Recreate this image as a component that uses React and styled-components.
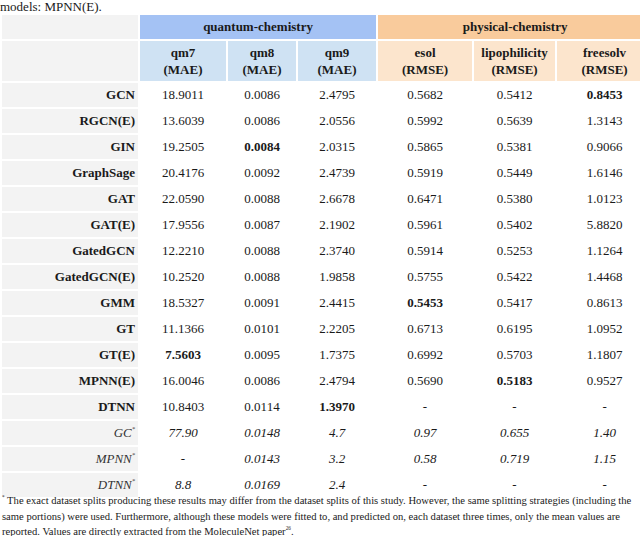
import styled, { createGlobalStyle, css } from "styled-components";

const GlobalStyle = createGlobalStyle`
  html, body {
    margin: 0;
    padding: 0;
    background: #ffffff;
    overflow: hidden;
  }
  body {
    font-family: "Liberation Serif", "Times New Roman", serif;
    color: #1a1a1a;
  }
`;

const Page = styled.div`
  width: 640px;
  height: 536px;
  overflow: hidden;
`;

const Lead = styled.p`
  margin: 0;
  height: 13px;
  font-size: 13px;
  line-height: 13px;
  white-space: nowrap;
`;

const Table = styled.table`
  width: 654px;
  border-collapse: separate;
  border-spacing: 2px;
  table-layout: fixed;
  font-family: "Liberation Serif", "Times New Roman", serif;
  font-size: 13px;
  color: #1a1a1a;
`;

const Cell = styled.td`
  padding: 0;
  height: 24px;
  line-height: 16px;
  text-align: center;
  vertical-align: middle;
  white-space: nowrap;
  font-weight: ${(p) => (p.$bold ? "bold" : "normal")};
  font-style: ${(p) => (p.$italic ? "italic" : "normal")};
`;

const Corner = styled.td`
  background: #f3f3f3;
  padding: 0;
`;

const GroupHead = styled.th`
  height: 24px;
  padding: 0;
  font-weight: bold;
  text-align: center;
  vertical-align: middle;
  background: ${(p) => (p.$tone === "blue" ? "#a4c2f4" : "#f9cb9c")};
`;

const SubHead = styled.th`
  height: 40px;
  padding: 0;
  font-weight: bold;
  line-height: 17px;
  text-align: center;
  vertical-align: middle;
  background: ${(p) => (p.$tone === "blue" ? "#cfe2f3" : "#fce5cd")};
`;

const RowLabel = styled.th`
  height: 24px;
  padding: 0 3px 0 0;
  text-align: right;
  vertical-align: middle;
  background: #f3f3f3;
  white-space: nowrap;
  ${(p) =>
    p.$italic
      ? css`
          font-weight: normal;
          font-style: italic;
          color: #333333;
        `
      : css`
          font-weight: bold;
        `}
`;

const Sup = styled.sup`
  font-size: 0.5em;
  vertical-align: 0.9em;
  line-height: 0;
`;

const Footnote = styled.p`
  margin: -6px 0 0;
  padding-left: 2px;
  font-size: 10.6px;
  line-height: 15.5px;
  white-space: nowrap;
  color: #1a1a1a;
`;

const widths = [136, 86, 68, 78, 94, 81, 95];

const blue = [
  ["qm7", "MAE"],
  ["qm8", "MAE"],
  ["qm9", "MAE"],
];
const orange = [
  ["esol", "RMSE"],
  ["lipophilicity", "RMSE"],
  ["freesolv", "RMSE"],
];

// [label, values, index of bold value]
const rows = [
  ["GCN", ["18.9011", "0.0086", "2.4795", "0.5682", "0.5412", "0.8453"], 5],
  ["RGCN(E)", ["13.6039", "0.0086", "2.0556", "0.5992", "0.5639", "1.3143"], -1],
  ["GIN", ["19.2505", "0.0084", "2.0315", "0.5865", "0.5381", "0.9066"], 1],
  ["GraphSage", ["20.4176", "0.0092", "2.4739", "0.5919", "0.5449", "1.6146"], -1],
  ["GAT", ["22.0590", "0.0088", "2.6678", "0.6471", "0.5380", "1.0123"], -1],
  ["GAT(E)", ["17.9556", "0.0087", "2.1902", "0.5961", "0.5402", "5.8820"], -1],
  ["GatedGCN", ["12.2210", "0.0088", "2.3740", "0.5914", "0.5253", "1.1264"], -1],
  ["GatedGCN(E)", ["10.2520", "0.0088", "1.9858", "0.5755", "0.5422", "1.4468"], -1],
  ["GMM", ["18.5327", "0.0091", "2.4415", "0.5453", "0.5417", "0.8613"], 3],
  ["GT", ["11.1366", "0.0101", "2.2205", "0.6713", "0.6195", "1.0952"], -1],
  ["GT(E)", ["7.5603", "0.0095", "1.7375", "0.6992", "0.5703", "1.1807"], 0],
  ["MPNN(E)", ["16.0046", "0.0086", "2.4794", "0.5690", "0.5183", "0.9527"], 4],
  ["DTNN", ["10.8403", "0.0114", "1.3970", "-", "-", "-"], 2],
];

const reported = [
  ["GC", ["77.90", "0.0148", "4.7", "0.97", "0.655", "1.40"]],
  ["MPNN", ["-", "0.0143", "3.2", "0.58", "0.719", "1.15"]],
  ["DTNN", ["8.8", "0.0169", "2.4", "-", "-", "-"]],
];

export default function App() {
  return (
    <Page>
      <GlobalStyle />
      <Lead>models: MPNN(E).</Lead>
      <Table>
        <colgroup>
          {widths.map((w, i) => (
            <col key={i} style={{ width: w }} />
          ))}
        </colgroup>
        <thead>
          <tr>
            <Corner />
            <GroupHead colSpan={3} $tone="blue">quantum-chemistry</GroupHead>
            <GroupHead colSpan={3} $tone="orange">physical-chemistry</GroupHead>
          </tr>
          <tr>
            <Corner />
            {blue.map(([name, metric]) => (
              <SubHead key={name} $tone="blue">
                {name}
                <br />({metric})
              </SubHead>
            ))}
            {orange.map(([name, metric]) => (
              <SubHead key={name} $tone="orange">
                {name}
                <br />({metric})
              </SubHead>
            ))}
          </tr>
        </thead>
        <tbody>
          {rows.map(([label, values, best]) => (
            <tr key={label}>
              <RowLabel>{label}</RowLabel>
              {values.map((v, i) => (
                <Cell key={i} $bold={i === best}>
                  {v}
                </Cell>
              ))}
            </tr>
          ))}
          {reported.map(([label, values]) => (
            <tr key={label + "*"}>
              <RowLabel $italic>
                {label}
                <Sup>*</Sup>
              </RowLabel>
              {values.map((v, i) => (
                <Cell key={i} $italic>
                  {v}
                </Cell>
              ))}
            </tr>
          ))}
        </tbody>
      </Table>
      <Footnote>
        <Sup>*</Sup> The exact dataset splits producing these results may differ from the dataset splits of this study. However, the same splitting strategies (including the
        <br />
        same portions) were used. Furthermore, although these models were fitted to, and predicted on, each dataset three times, only the mean values are
        <br />
        reported. Values are directly extracted from the MoleculeNet paper<Sup>26</Sup>.
      </Footnote>
    </Page>
  );
}
